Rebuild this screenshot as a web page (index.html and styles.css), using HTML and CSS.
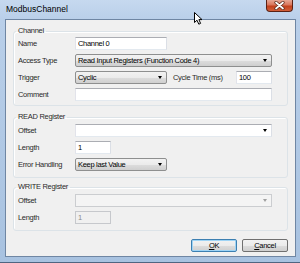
FILE: index.html
```html
<!DOCTYPE html>
<html lang="en">
  <head>
    <meta charset="UTF-8" />
    <title>ModbusChannel</title>
    <link rel="stylesheet" href="styles.css">
  </head>
  <body>
    <div class="window">
      <div class="titlebar">
        <span class="title">ModbusChannel</span>
        <span class="close-btn">
          <svg width="11" height="9" viewBox="0 0 11 9">
            <path d="M2 1.5 L9 7.5 M9 1.5 L2 7.5" stroke="#5a2a1c" stroke-width="3.2" stroke-linecap="round" />
            <path d="M2 1.5 L9 7.5 M9 1.5 L2 7.5" stroke="#fff" stroke-width="1.7" stroke-linecap="round" />
          </svg>
        </span>
      </div>

      <div class="client">
        <fieldset class="group group-channel">
          <legend>Channel</legend>
          <div class="rows">
            <label>Name</label>
            <input type="text" class="textbox short" value="Channel 0" />

            <label>Access Type</label>
            <div class="combo wide"><span>Read Input Registers (Function Code 4)</span><i class="arrow"></i></div>

            <label>Trigger</label>
            <div class="inline">
              <div class="combo short"><span>Cyclic</span><i class="arrow"></i></div>
              <label class="inline-label">Cycle Time (ms)</label>
              <input type="text" class="textbox tiny" value="100" />
            </div>

            <label>Comment</label>
            <input type="text" class="textbox wide" value="" />
          </div>
        </fieldset>

        <fieldset class="group group-read">
          <legend>READ Register</legend>
          <div class="rows">
            <label>Offset</label>
            <div class="combo editable wide"><span></span><i class="arrow"></i></div>

            <label>Length</label>
            <input type="text" class="textbox tiny" value="1" />

            <label>Error Handling</label>
            <div class="combo short"><span>Keep last Value</span><i class="arrow"></i></div>
          </div>
        </fieldset>

        <fieldset class="group">
          <legend>WRITE Register</legend>
          <div class="rows">
            <label>Offset</label>
            <div class="combo editable disabled wide"><span></span><i class="arrow"></i></div>

            <label>Length</label>
            <input type="text" class="textbox tiny" value="1" disabled />
          </div>
        </fieldset>

        <div class="buttons">
          <button class="btn default"><u>O</u>K</button>
          <button class="btn"><u>C</u>ancel</button>
        </div>
      </div>

      <svg class="cursor" width="10" height="13" viewBox="0 0 10 13">
        <path d="M0.5 0.5 L0.5 10.5 L3 8.2 L4.8 12.2 L6.6 11.4 L4.9 7.6 L8 7.6 Z" fill="#fff" stroke="#000" stroke-width="1" stroke-linejoin="round" />
      </svg>
    </div>
  </body>
</html>
```

FILE: styles.css
```css
body {
  margin: 0;
  font-family: "Liberation Sans", Arial, sans-serif;
  font-size: 7.5px;
  letter-spacing: -0.3px;
  color: #2a2a2a;
}

.window {
  position: relative;
  width: 300px;
  height: 263px;
  box-sizing: border-box;
  padding: 0 4px 5px 5px;
  display: flex;
  flex-direction: column;
  background: linear-gradient(to bottom, #c6d9ef 0, #b9cfe9 20px, #a8c2e0 100%);
  border-bottom: 1px solid #4f6581;
}

.titlebar {
  height: 19px;
  display: flex;
  justify-content: space-between;
  align-items: flex-start;
}

.title {
  margin: 4px 0 0 1px;
  font-size: 8.5px;
  letter-spacing: 0;
  color: #000;
}

.close-btn {
  width: 27px;
  height: 12px;
  margin-right: 3px;
  box-sizing: border-box;
  display: flex;
  justify-content: center;
  align-items: center;
  border: 1px solid #5b2114;
  border-top: none;
  border-radius: 0 0 4px 4px;
  background: linear-gradient(to bottom, #e7a795 0, #d9755b 45%, #c2401c 55%, #d2603a 100%);
}

.client {
  flex: 1;
  display: flex;
  flex-direction: column;
  background: #f0f0f0;
  border: 1px solid #6f86a3;
  padding: 6px 7px 3px 7px;
}

.group {
  margin: 4px 0 0 0;
  padding: 2px 15px 6px 4px;
  border: 1px solid #dce3e8;
  border-radius: 3px;
  box-shadow: inset 1px 1px #fff;
  min-width: 0;
}

.group-channel {
  margin-top: 0;
  padding-top: 1px;
  padding-bottom: 4px;
}

.group-read {
  margin-top: 6px;
}

.group legend {
  padding: 0 2px;
  margin-left: -2px;
  line-height: 10px;
  color: #2a2a2a;
}

.rows {
  display: grid;
  grid-template-columns: 57px 1fr;
  row-gap: 4px;
  align-items: center;
}

.inline {
  display: flex;
  align-items: center;
}

.inline-label {
  margin: 0 7px 0 6px;
  flex: 1;
  white-space: nowrap;
}

.textbox,
.combo {
  height: 13px;
  box-sizing: border-box;
  font-family: inherit;
  font-size: 7.5px;
  letter-spacing: -0.3px;
  color: #000;
  margin: 0;
}

.textbox {
  padding: 0 2px;
  background: #fff;
  border: 1px solid;
  border-color: #abadb3 #dbdfe6 #e3e9ef #e2e3ea;
  outline: none;
}

.textbox:disabled {
  background: #f0f0f0;
  border-color: #c6c8cc;
  color: #8a8a8a;
}

.wide {
  width: 197px;
}

.short {
  width: 92px;
}

.tiny {
  width: 36px;
}

.combo {
  display: flex;
  align-items: center;
  justify-content: space-between;
  padding: 0 4px 0 2px;
  border: 1px solid #8e8f8f;
  border-radius: 2px;
  background: linear-gradient(to bottom, #f2f2f2 0, #ebebeb 50%, #dddddd 51%, #cfcfcf 100%);
}

.combo.editable {
  border-radius: 0;
  background: #fff;
  border-color: #abadb3 #dbdfe6 #e3e9ef #e2e3ea;
}

.combo.disabled {
  background: #f4f4f4;
  border-color: #cbcdd0;
}

.arrow {
  width: 0;
  height: 0;
  border-left: 2.5px solid transparent;
  border-right: 2.5px solid transparent;
  border-top: 3px solid #000;
}

.combo.disabled .arrow {
  border-top-color: #a0a0a0;
}

.buttons {
  margin-top: 8px;
  display: flex;
  justify-content: flex-end;
  gap: 5px;
}

.btn {
  width: 46px;
  height: 13px;
  padding: 0;
  font-family: inherit;
  font-size: 7.5px;
  letter-spacing: -0.3px;
  color: #000;
  border: 1px solid #707070;
  border-radius: 2px;
  background: linear-gradient(to bottom, #f2f2f2 0, #ebebeb 50%, #dddddd 51%, #cfcfcf 100%);
}

.btn.default {
  border-color: #3c7fb1;
  box-shadow: inset 0 0 0 1px #9fd4f5;
}

.cursor {
  position: absolute;
  left: 194px;
  top: 12px;
}
```
